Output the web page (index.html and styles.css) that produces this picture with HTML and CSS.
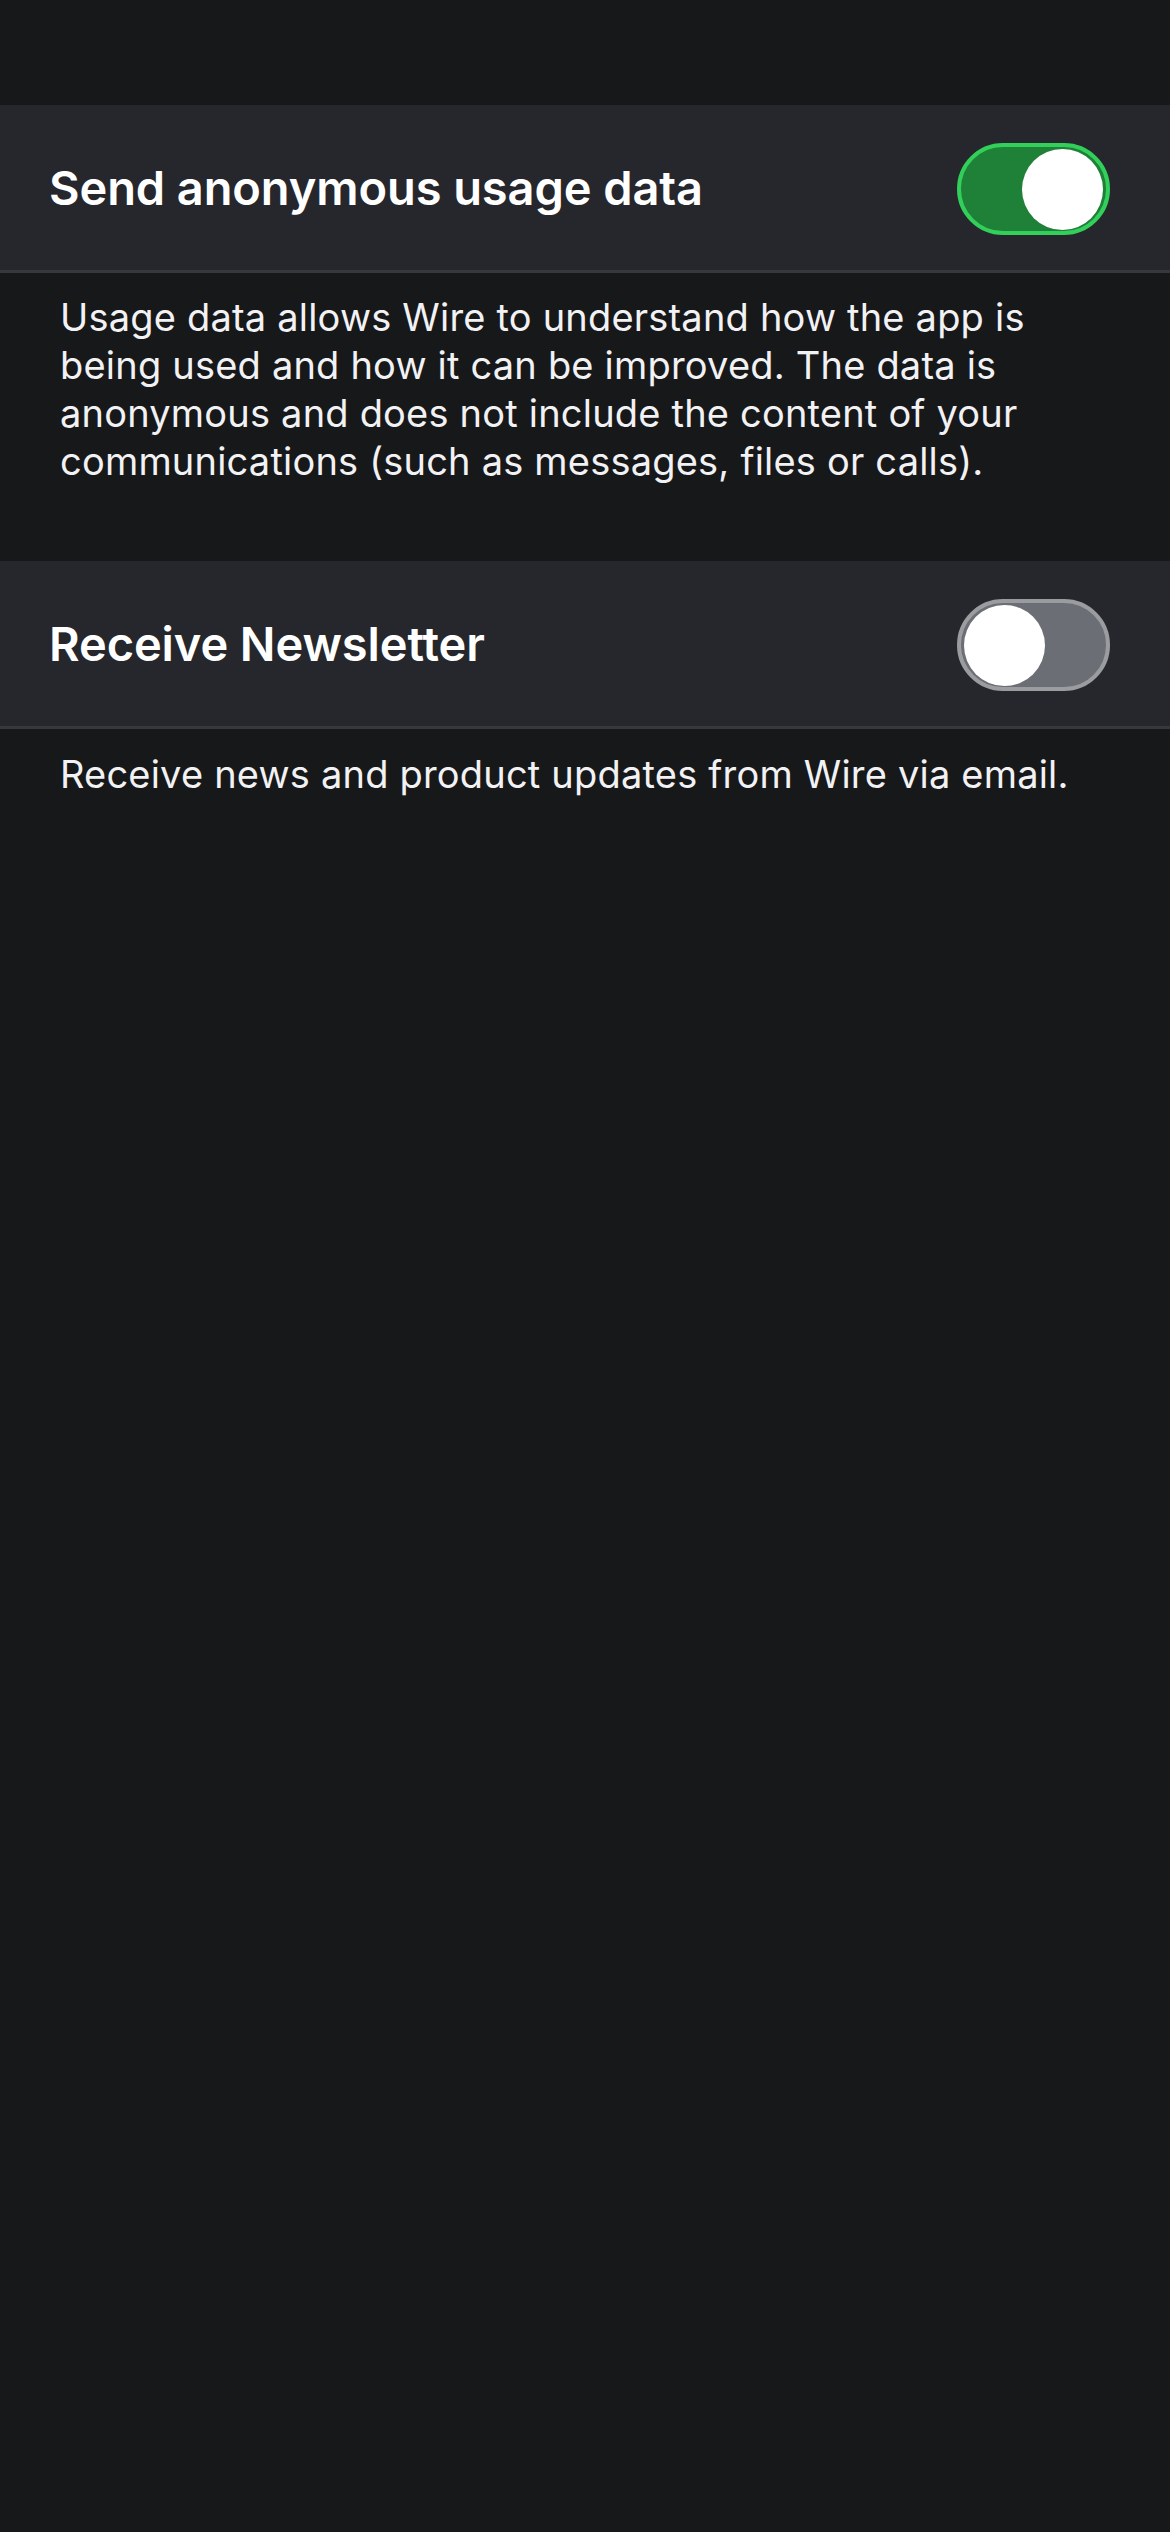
FILE: index.html
```html
<!DOCTYPE html>
<html lang="en">
<head>
<meta charset="utf-8">
<title>Privacy settings</title>
<link rel="stylesheet" href="styles.css">
</head>
<body>
<main class="screen">
  <section class="group">
    <div class="row">
      <span class="row-title">Send anonymous usage data</span>
      <span class="switch switch-on"><span class="knob"></span></span>
    </div>
    <p class="footer">Usage data allows Wire to understand how the app is being used and how it can be improved. The data is anonymous and does not include the content of your communications (such as messages, files or calls).</p>
  </section>
  <section class="group">
    <div class="row">
      <span class="row-title">Receive Newsletter</span>
      <span class="switch switch-off"><span class="knob"></span></span>
    </div>
    <p class="footer">Receive news and product updates from Wire via email.</p>
  </section>
</main>
</body>
</html>
```
FILE: styles.css
```css
html, body {
  margin: 0;
  padding: 0;
  background: #17181a;
}
body {
  font-family: Inter, "Noto Sans", "Liberation Sans", sans-serif;
  color: #ffffff;
  -webkit-font-smoothing: antialiased;
}
.screen {
  min-height: 2532px;
  padding-top: 105px;
  box-sizing: border-box;
}
.group {
  display: flex;
  flex-direction: column;
}
.row {
  height: 165px;
  background: #26272c;
  border-bottom: 3px solid #37383d;
  display: flex;
  align-items: center;
  justify-content: space-between;
  padding: 0 60px 0 49px;
}
.row-title {
  font-size: 47px;
  font-weight: 600;
  letter-spacing: -0.1px;
}
.switch {
  width: 153px;
  height: 92px;
  box-sizing: border-box;
  border-radius: 46px;
  border: 4px solid;
  display: flex;
  align-items: center;
  padding: 0 3px;
  margin-top: 3px;
}
.switch-on {
  background: #1f8038;
  border-color: #32d05a;
  justify-content: flex-end;
}
.switch-off {
  background: #6b6e74;
  border-color: #9a9ca0;
  justify-content: flex-start;
}
.knob {
  width: 81px;
  height: 81px;
  border-radius: 50%;
  background: #ffffff;
}
.footer {
  margin: 0;
  padding: 20px 100px 76px 60px;
  font-size: 38px;
  line-height: 48px;
  font-weight: 400;
  color: #f2f2f4;
  letter-spacing: 0.2px;
}
.group + .group .footer {
  padding-top: 21px;
}
```
